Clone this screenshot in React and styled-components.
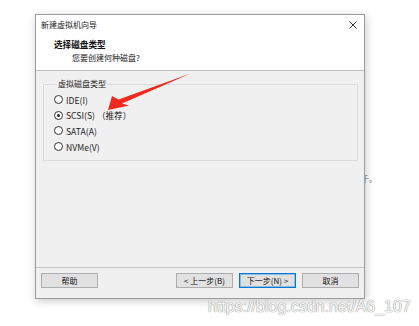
import React from "react";
import styled, { createGlobalStyle } from "styled-components";

const Global = createGlobalStyle`
  html, body { margin: 0; padding: 0; background: #ffffff; }
  body { width: 419px; height: 326px; overflow: hidden; }
`;

const Page = styled.div`
  position: relative;
  width: 419px;
  height: 326px;
  padding: 14px 0 0 35px;
  box-sizing: border-box;
  font-family: "Noto Sans CJK SC", "Noto Sans", sans-serif;
  font-size: 8px;
  color: #1a1a1a;
`;

const Dialog = styled.div`
  position: relative;
  z-index: 1;
  width: 330px;
  height: 285px;
  box-sizing: border-box;
  border: 1px solid #9c9c9c;
  box-shadow: 1px 2px 8px rgba(0, 0, 0, 0.22);
  display: flex;
  flex-direction: column;
  background: #f0f0f0;
`;

const TitleBar = styled.div`
  height: 20px;
  background: #ffffff;
  display: flex;
  align-items: center;
  justify-content: space-between;
  padding: 0 7px 0 5px;
`;

const TitleText = styled.span`
  line-height: 12px;
  color: #222;
`;

const Header = styled.div`
  background: #ffffff;
  height: 36px;
  box-sizing: border-box;
  padding: 3px 0 0 18px;
  border-bottom: 1px solid #bdbdbd;
  display: flex;
  flex-direction: column;
`;

const HeaderTitle = styled.div`
  font-weight: bold;
  font-size: 8.6px;
  line-height: 13px;
  color: #111;
`;

const HeaderSub = styled.div`
  line-height: 13px;
  padding-left: 18px;
  color: #222;
`;

const Body = styled.div`
  flex: 1;
  padding: 7px 6px 0 7px;
  border-bottom: 1px solid #c4c4c4;
`;

const Group = styled.fieldset`
  margin: 0;
  padding: 2px 0 6px 10px;
  border: 1px solid #dcdcdc;
  border-radius: 0;
`;

const Legend = styled.legend`
  margin-left: 3px;
  padding: 0 1px;
  line-height: 12px;
  color: #222;
`;

const Row = styled.label`
  display: flex;
  align-items: center;
  height: 15.6px;
  gap: 3px;
  font-size: 8.6px;
  color: #1e1e1e;
`;

const Radio = styled.span`
  width: 9px;
  height: 9px;
  box-sizing: border-box;
  border-radius: 50%;
  border: 1px solid #333;
  background: #fff;
  display: flex;
  align-items: center;
  justify-content: center;
  &::after {
    content: "";
    width: 3px;
    height: 3px;
    border-radius: 50%;
    background: ${(p) => (p.$checked ? "#222" : "transparent")};
  }
`;

const Footer = styled.div`
  height: 25px;
  display: flex;
  align-items: flex-start;
  padding: 5px 5px 0 5px;
  gap: 6px;
`;

const Spacer = styled.div`
  flex: 1;
`;

const Button = styled.div`
  width: 57px;
  height: 15px;
  box-sizing: border-box;
  background: #e1e1e1;
  border: 1px solid ${(p) => (p.$default ? "#0078d7" : "#adadad")};
  box-shadow: ${(p) => (p.$default ? "inset 0 0 0 1px rgba(0,120,215,0.35)" : "none")};
  display: flex;
  align-items: center;
  justify-content: center;
  line-height: 12px;
  color: #111;
`;

const Watermark = styled.div`
  position: absolute;
  z-index: 2;
  left: 208px;
  top: 297px;
  font-family: "Liberation Sans", Arial, sans-serif;
  font-size: 16px;
  line-height: 20px;
  color: #f7f7f7;
  text-shadow: 0 0 1px #8a8a8a, 0 0 1px #9a9a9a;
  white-space: nowrap;
`;

const BehindText = styled.div`
  position: absolute;
  z-index: 0;
  left: 361px;
  top: 173px;
  font-size: 8px;
  color: #777;
`;

const ArrowLayer = styled.svg`
  position: absolute;
  z-index: 3;
  left: 0;
  top: 0;
  pointer-events: none;
`;

const CloseIcon = () => (
  <svg width="8" height="8" viewBox="0 0 8 8">
    <path d="M0.5 0.5 L7.5 7.5 M7.5 0.5 L0.5 7.5" stroke="#333" strokeWidth="1" />
  </svg>
);

const options = [
  { label: "IDE(I)" },
  { label: "SCSI(S)", extra: " （推荐）", checked: true },
  { label: "SATA(A)" },
  { label: "NVMe(V)" },
];

export default function App() {
  return (
    <>
      <Global />
      <Page>
        <BehindText>千。</BehindText>
        <Dialog>
          <TitleBar>
            <TitleText>新建虚拟机向导</TitleText>
            <CloseIcon />
          </TitleBar>
          <Header>
            <HeaderTitle>选择磁盘类型</HeaderTitle>
            <HeaderSub>您要创建何种磁盘?</HeaderSub>
          </Header>
          <Body>
            <Group>
              <Legend>虚拟磁盘类型</Legend>
              {options.map((o) => (
                <Row key={o.label}>
                  <Radio $checked={o.checked} />
                  <span>
                    {o.label}
                    {o.extra}
                  </span>
                </Row>
              ))}
            </Group>
          </Body>
          <Footer>
            <Button>帮助</Button>
            <Spacer />
            <Button>&lt; 上一步(B)</Button>
            <Button $default>下一步(N) &gt;</Button>
            <Button>取消</Button>
          </Footer>
        </Dialog>
        <Watermark>https://blog.csdn.net/A6_107</Watermark>
        <ArrowLayer width="419" height="326" viewBox="0 0 419 326">
          <path
            d="M108 110 L112 96 L118.5 99.5 L190.5 73.5 L122 103.5 L129 105.5 Z"
            fill="#f0281e"
          />
        </ArrowLayer>
      </Page>
    </>
  );
}
